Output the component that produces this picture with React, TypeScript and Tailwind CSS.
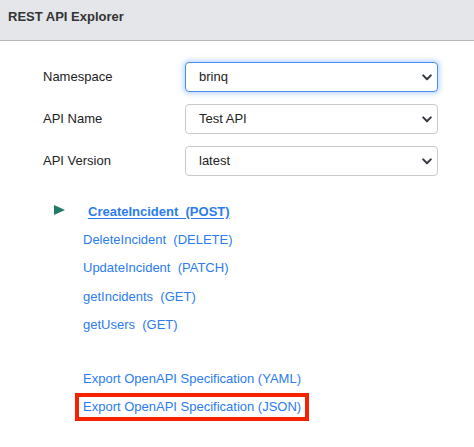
import React from "react";

const font = { fontFamily: '"Liberation Sans", Arial, Helvetica, sans-serif' };

function Chevron() {
  return (
    <svg width="10" height="7" viewBox="0 0 10 7" className="shrink-0">
      <path d="M1.2 1.4 L5 5.2 L8.8 1.4" fill="none" stroke="#343a40" strokeWidth="2" strokeLinecap="round" strokeLinejoin="round" />
    </svg>
  );
}

function SelectBox({ value, focused }: { value: string; focused?: boolean }) {
  return (
    <div
      className={
        focused
          ? "flex h-[30px] w-[253px] items-center justify-between rounded-[4px] border border-[#4a8ef5] bg-white pl-[13px] pr-[5px] shadow-[0_0_5px_2px_rgba(74,142,245,0.35)]"
          : "flex h-[30px] w-[253px] items-center justify-between rounded-[4px] border border-[#c9c9c9] bg-white pl-[13px] pr-[5px]"
      }
    >
      <span className="text-[13px] text-[#222]">{value}</span>
      <Chevron />
    </div>
  );
}

function Row({ label, value, focused }: { label: string; value: string; focused?: boolean }) {
  return (
    <div className="flex items-center">
      <div className="w-[142px] text-[13px] text-[#222]">{label}</div>
      <SelectBox value={value} focused={focused} />
    </div>
  );
}

const linkCls = "text-[13px] text-[#2b7cf0] whitespace-pre leading-[28.5px] block";

export default function App() {
  return (
    <div className="min-h-[447px] w-[474px] bg-white" style={font}>
      <div className="h-[41px] border-b border-[#b9b9b9] bg-[#e4e6e9] pl-[8px] pt-[8px]">
        <div className="text-[13px] font-bold leading-[18px] text-[#333]">REST API Explorer</div>
      </div>
      <div className="flex flex-col gap-[12px] pl-[43px] pt-[21px]">
        <Row label="Namespace" value="brinq" focused />
        <Row label="API Name" value="Test API" />
        <Row label="API Version" value="latest" />
      </div>
      <div className="pl-[83px] pt-[21px]">
        <div className="-ml-[29px] flex h-[28.5px] items-center">
          <svg width="11" height="10" viewBox="0 0 11 10" className="mt-[-2px] shrink-0">
            <path d="M0 0 L11 5 L0 10 Z" fill="#237a65" />
          </svg>
          <a className="ml-[23px] whitespace-pre text-[13px] font-bold text-[#2b7cf0] underline underline-offset-[2px]">
            {"CreateIncident  (POST)"}
          </a>
        </div>
        <a className={linkCls}>{"DeleteIncident  (DELETE)"}</a>
        <a className={linkCls}>{"UpdateIncident  (PATCH)"}</a>
        <a className={linkCls}>{"getIncidents  (GET)"}</a>
        <a className={linkCls}>{"getUsers  (GET)"}</a>
        <div className="h-[25px]" />
        <a className={linkCls}>{"Export OpenAPI Specification (YAML)"}</a>
        <div className="-ml-[8px]">
          <a className="inline-block border-4 border-[#f52200] px-[4px] text-[13px] leading-[20px] text-[#2b7cf0]">
            Export OpenAPI Specification (JSON)
          </a>
        </div>
      </div>
    </div>
  );
}
